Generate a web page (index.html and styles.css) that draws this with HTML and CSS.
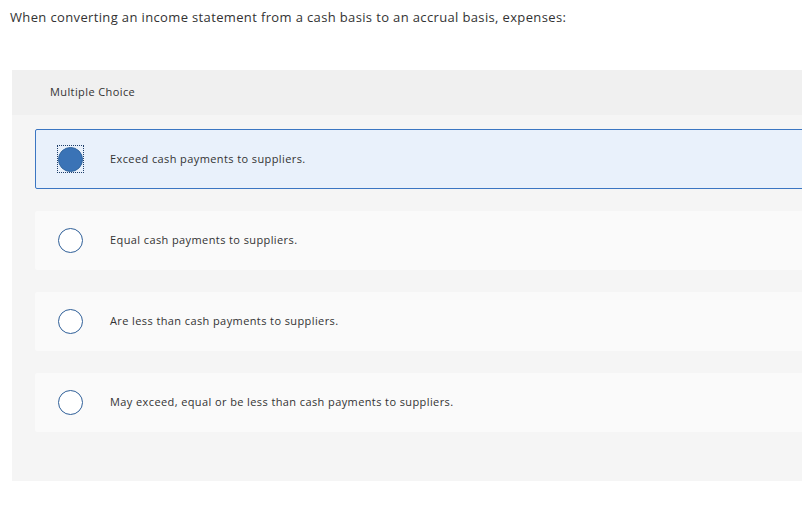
FILE: index.html
```html
<!DOCTYPE html>
<html>
<head>
<meta charset="utf-8">
<link rel="stylesheet" href="styles.css">
</head>
<body>
<p class="question">When converting an income statement from a cash basis to an accrual basis, expenses:</p>
<section class="panel">
  <header class="panel-head">Multiple Choice</header>
  <div class="options">
    <div class="option selected">
      <span class="focus"><span class="radio filled"></span></span>
      <span class="label">Exceed cash payments to suppliers.</span>
    </div>
    <div class="option">
      <span class="focus blank"><span class="radio"></span></span>
      <span class="label">Equal cash payments to suppliers.</span>
    </div>
    <div class="option">
      <span class="focus blank"><span class="radio"></span></span>
      <span class="label">Are less than cash payments to suppliers.</span>
    </div>
    <div class="option">
      <span class="focus blank"><span class="radio"></span></span>
      <span class="label">May exceed, equal or be less than cash payments to suppliers.</span>
    </div>
  </div>
</section>
</body>
</html>
```

FILE: styles.css
```css
html, body {
  margin: 0;
  padding: 0;
  background: #ffffff;
  overflow: hidden;
}
body {
  font-family: "Open Sans", "Liberation Sans", sans-serif;
  color: #333333;
}
.question {
  margin: 0;
  padding: 8px 0 0 10px;
  font-size: 13px;
  line-height: 18px;
  height: 62px;
  letter-spacing: 0.36px;
}
.panel {
  margin-left: 12px;
  margin-right: -40px;
  background: #f5f5f5;
}
.panel-head {
  height: 45px;
  background: #f0f0f0;
  padding-left: 38px;
  display: flex;
  align-items: center;
  font-size: 11px;
  line-height: 14px;
  padding-bottom: 1px;
  box-sizing: border-box;
  letter-spacing: 0.4px;
}
.options {
  display: flex;
  flex-direction: column;
  gap: 22px;
  padding: 14px 0 49px 23px;
}
.option {
  height: 59px;
  background: #fafafa;
  display: flex;
  align-items: center;
  padding-left: 22px;
  border-radius: 2px;
}
.option.selected {
  height: 58px;
  background: #e9f1fb;
  border: 1px solid #3b76c2;
  padding-left: 21px;
}
.focus {
  width: 25px;
  height: 26px;
  border: 1px dotted #1f3f6a;
  display: flex;
  align-items: center;
  justify-content: center;
  margin-right: 26px;
}
.focus.blank {
  border-color: transparent;
}
.radio {
  width: 25px;
  height: 25px;
  border: 1.5px solid #2f5f98;
  border-radius: 50%;
  background: #ffffff;
  box-sizing: border-box;
}
.radio.filled {
  background: #3a73b6;
  border-color: #33679f;
}
.label {
  font-size: 11px;
  line-height: 14px;
  padding-bottom: 1px;
  letter-spacing: 0.4px;
}
```
